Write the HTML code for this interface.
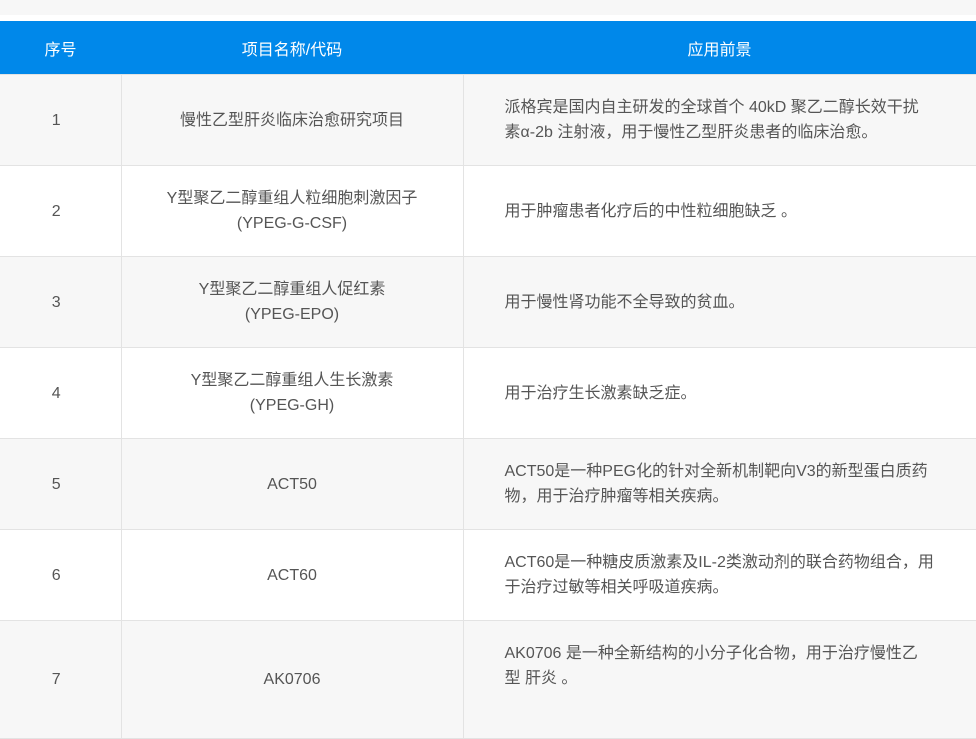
<!DOCTYPE html>
<html><head><meta charset="utf-8"><style>
body{margin:0;width:976px;height:730px;overflow:hidden;background:#fff;font-family:"Liberation Sans","Noto Sans CJK SC",sans-serif;}
.top{position:absolute;left:0;top:0;width:976px;height:15px;background:#f7f7f7}
table{position:absolute;left:0;top:21px;width:976px;border-collapse:collapse;table-layout:fixed}
th{background:#0088ea;color:#fff;font-weight:normal;font-size:16px;height:53px;padding:0;text-align:center}
td{height:90px;border:1px solid #e3e3e3;font-size:16px;color:#555;line-height:25px;text-align:center;padding:0}
tr:nth-child(even) td{background:#f7f7f7}
td:first-child{border-left:none;padding-right:8px}
td.d{text-align:left;padding:0 20px 0 41px;white-space:nowrap}
tr:last-child td{height:117px}
tr:last-child td.d{vertical-align:top;padding-top:20px;height:97px}
</style></head><body>
<div class="top"></div>
<table>
<colgroup><col style="width:121px"><col style="width:342px"><col style="width:513px"></colgroup>
<tr><th>序号</th><th>项目名称/代码</th><th>应用前景</th></tr>
<tr><td>1</td><td>慢性乙型肝炎临床治愈研究项目</td><td class="d">派格宾是国内自主研发的全球首个 40kD 聚乙二醇长效干扰<br>素α-2b 注射液，用于慢性乙型肝炎患者的临床治愈。</td></tr>
<tr><td>2</td><td>Y型聚乙二醇重组人粒细胞刺激因子<br>(YPEG-G-CSF)</td><td class="d">用于肿瘤患者化疗后的中性粒细胞缺乏 。</td></tr>
<tr><td>3</td><td>Y型聚乙二醇重组人促红素<br>(YPEG-EPO)</td><td class="d">用于慢性肾功能不全导致的贫血。</td></tr>
<tr><td>4</td><td>Y型聚乙二醇重组人生长激素<br>(YPEG-GH)</td><td class="d">用于治疗生长激素缺乏症。</td></tr>
<tr><td>5</td><td>ACT50</td><td class="d">ACT50是一种PEG化的针对全新机制靶向V3的新型蛋白质药<br>物，用于治疗肿瘤等相关疾病。</td></tr>
<tr><td>6</td><td>ACT60</td><td class="d">ACT60是一种糖皮质激素及IL-2类激动剂的联合药物组合，用<br>于治疗过敏等相关呼吸道疾病。</td></tr>
<tr><td>7</td><td>AK0706</td><td class="d">AK0706 是一种全新结构的小分子化合物，用于治疗慢性乙<br>型 肝炎 。</td></tr>
</table>
</body></html>
